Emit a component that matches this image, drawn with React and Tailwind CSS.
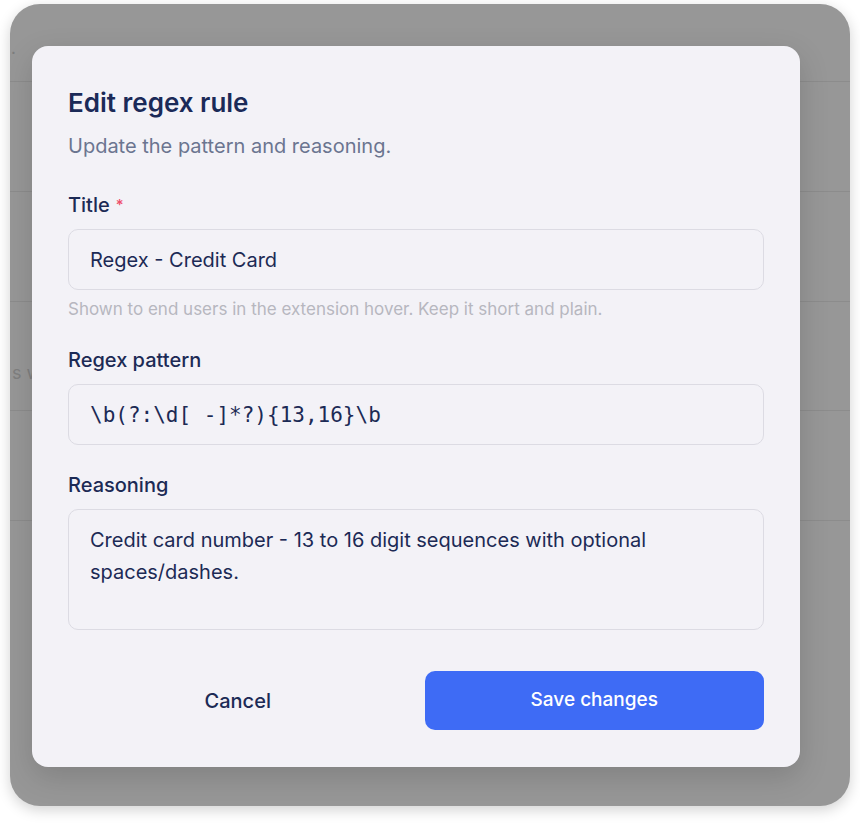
import React, { useState } from 'react';

const Field = ({ label, required, children, hint, className }) => (
  <div className={`flex flex-col ${className || ''}`}>
    <label className="text-[20px] font-medium text-[#1c2a55] leading-6 mb-3">
      {label}
      {required && <span className="text-[#ee4d6a] ml-[6px] text-[15px] align-top">*</span>}
    </label>
    {children}
    {hint && <p className="text-[17px] text-[#b7b7bf] mt-[9px] leading-5">{hint}</p>}
  </div>
);

export default function App() {
  const [title, setTitle] = useState('Regex - Credit Card');
  const [pattern, setPattern] = useState('\\b(?:\\d[ -]*?){13,16}\\b');
  const [reasoning, setReasoning] = useState(
    'Credit card number - 13 to 16 digit sequences with optional spaces/dashes.'
  );

  return (
    <div className="w-[860px] h-[824px] bg-white pt-[4px] pl-[10px]" style={{ fontFamily: 'Inter, "Noto Sans", sans-serif' }}>
      <div className="relative w-[840px] h-[802px] rounded-[30px] bg-[#979797] overflow-hidden shadow-[0_4px_14px_rgba(0,0,0,0.18)]">
        {/* page behind the overlay */}
        <div className="h-[78px] border-b border-[#8c8c8c] pl-[1px] pt-[32px] text-[17px] leading-6 text-[#7d7d7d]">.</div>
        <div className="h-[110px] border-b border-[#8c8c8c]" />
        <div className="h-[110px] border-b border-[#8c8c8c]" />
        <div className="h-[109px] border-b border-[#8c8c8c] pl-[2px] pt-[59px] text-[18px] leading-6 text-[#7f7f7f]">s w</div>
        <div className="h-[110px] border-b border-[#8c8c8c]" />

        <div className="absolute left-[22px] top-[42px] w-[768px] rounded-[16px] bg-[#f3f2f7] px-[36px] pt-[41px] pb-[37px] shadow-[0_10px_30px_rgba(0,0,0,0.15)]">
          <h2 className="text-[26px] font-semibold text-[#1b2a58] leading-8">Edit regex rule</h2>
          <p className="text-[20px] text-[#6b7590] mt-[13px] leading-7">Update the pattern and reasoning.</p>

          <Field className="mt-[33px]" label="Title" required hint="Shown to end users in the extension hover. Keep it short and plain.">
            <input
              value={title}
              onChange={(e) => setTitle(e.target.value)}
              className="h-[61px] w-full rounded-[10px] border border-[#dcdbe3] bg-[#f3f2f7] px-[21px] text-[20px] text-[#1c2a55] outline-none"
            />
          </Field>

          <Field className="mt-[29px]" label="Regex pattern">
            <input
              value={pattern}
              onChange={(e) => setPattern(e.target.value)}
              className="h-[61px] w-full rounded-[10px] border border-[#dcdbe3] bg-[#f3f2f7] px-[21px] text-[21px] text-[#1c2a55] outline-none"
              style={{ fontFamily: '"DejaVu Sans Mono", monospace' }}
            />
          </Field>

          <Field className="mt-[28px]" label="Reasoning">
            <textarea
              value={reasoning}
              onChange={(e) => setReasoning(e.target.value)}
              className="h-[121px] w-full resize-none rounded-[10px] border border-[#dcdbe3] bg-[#f3f2f7] px-[21px] py-[14px] text-[20px] leading-8 text-[#1c2a55] outline-none"
            />
          </Field>

          <div className="mt-[41px] grid grid-cols-2 gap-[17px]">
            <button className="h-[59px] rounded-[10px] text-[20px] font-medium text-[#1c2a55]">Cancel</button>
            <button className="h-[59px] rounded-[10px] bg-[#3e6bf5] text-[19px] font-medium text-white">Save changes</button>
          </div>
        </div>
      </div>
    </div>
  );
}
